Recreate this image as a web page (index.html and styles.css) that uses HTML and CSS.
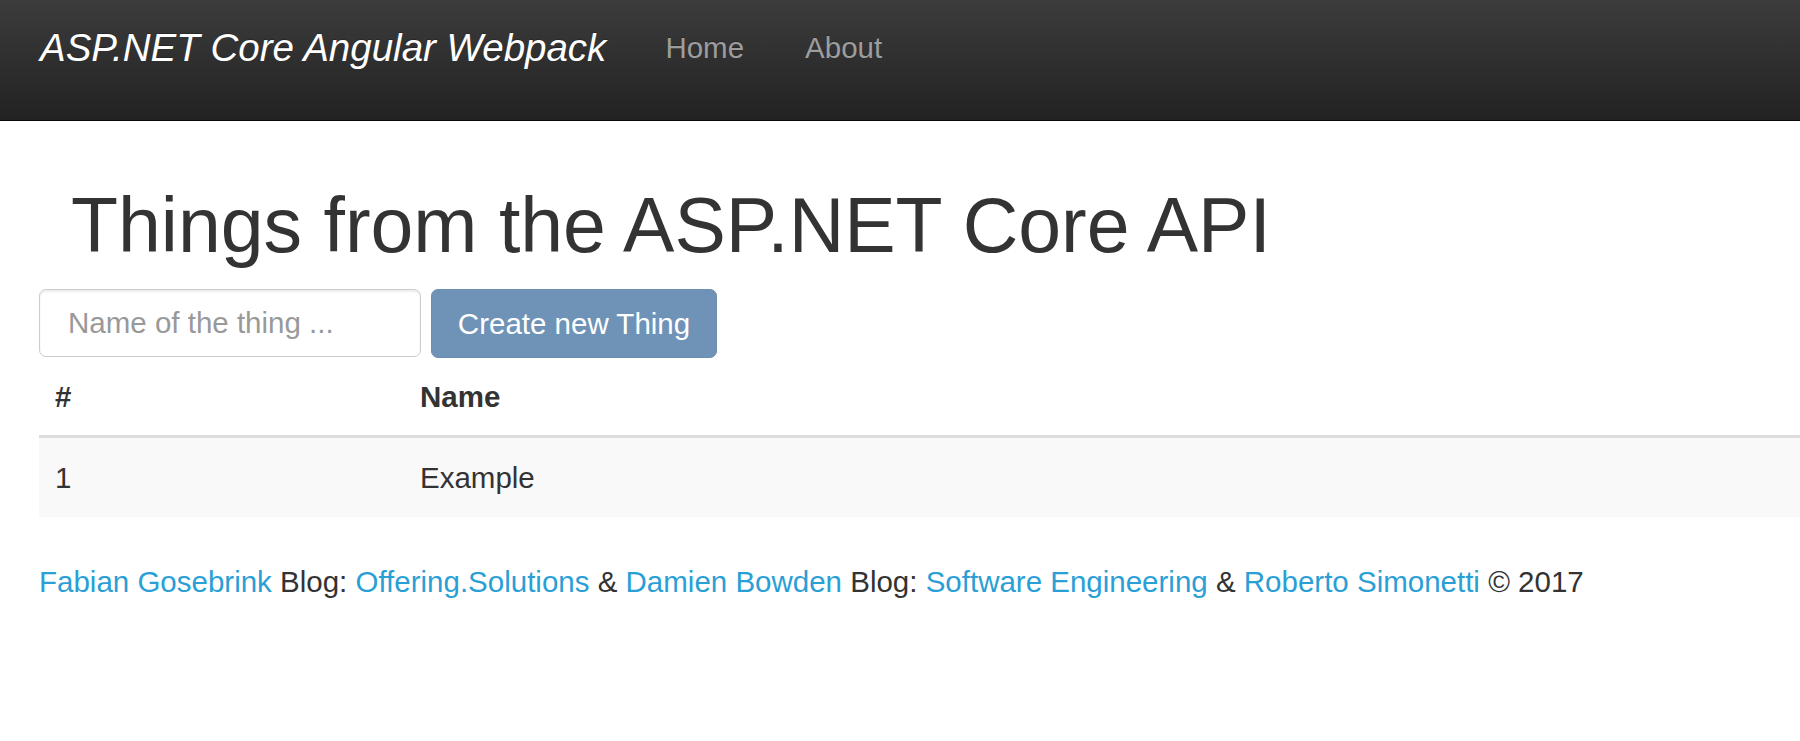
FILE: index.html
```html
<!DOCTYPE html>
<html lang="en">
<head>
<meta charset="utf-8">
<title>ASP.NET Core Angular Webpack</title>
<link rel="stylesheet" href="styles.css">
</head>
<body>
<nav class="navbar">
  <a class="brand" href="#">ASP.NET Core Angular Webpack</a>
  <ul class="nav">
    <li><a href="#">Home</a></li>
    <li><a href="#">About</a></li>
  </ul>
</nav>
<main class="container">
  <h1 class="title">Things from the ASP.NET Core API</h1>
  <form class="create-form">
    <input class="name-input" type="text" placeholder="Name of the thing ...">
    <button class="create-btn" type="button">Create new Thing</button>
  </form>
  <table class="things">
    <thead>
      <tr><th class="col-id">#</th><th>Name</th></tr>
    </thead>
    <tbody>
      <tr><td>1</td><td>Example</td></tr>
    </tbody>
  </table>
  <footer class="footer">
    <p><a href="#">Fabian Gosebrink</a> Blog: <a href="#">Offering.Solutions</a> &amp; <a href="#">Damien Bowden</a> Blog: <a href="#">Software Engineering</a> &amp; <a href="#">Roberto Simonetti</a> © 2017</p>
  </footer>
</main>
</body>
</html>
```
FILE: styles.css
```css
* { box-sizing: border-box; }
html, body { margin: 0; padding: 0; }
body {
  font-family: "Liberation Sans", Arial, sans-serif;
  font-size: 29.5px;
  line-height: 41px;
  color: #333;
  background: #fff;
}
a { text-decoration: none; }

.navbar {
  display: flex;
  align-items: flex-start;
  height: 121px;
  padding-left: 9px;
  background: linear-gradient(to bottom, #3c3c3c 0%, #222 100%);
  border-bottom: 1px solid #080808;
}
.brand {
  display: block;
  padding: 27px 31px;
  font-size: 38.5px;
  line-height: 42px;
  font-style: italic;
  color: #fff;
  text-shadow: 0 -1px 0 rgba(0,0,0,.25);
}
.nav {
  display: flex;
  list-style: none;
  margin: 0;
  padding: 0;
}
.nav a {
  display: block;
  padding: 27px 33px 27px 28px;
  font-size: 29.5px;
  line-height: 42px;
  color: #9d9d9d;
  text-shadow: 0 -1px 0 rgba(0,0,0,.25);
}

.container {
  padding-left: 39px;
}
.title {
  margin: 63px 0 0;
  padding-left: 32px;
  font-size: 77px;
  line-height: 83px;
  font-weight: 500;
  color: #333;
}

.create-form {
  display: flex;
  gap: 10px;
  margin-top: 22px;
}
.name-input {
  width: 382px;
  height: 68px;
  padding: 0 28px;
  border: 1px solid #ccc;
  border-radius: 7px;
  box-shadow: inset 0 2px 2px rgba(0,0,0,.075);
  font-family: inherit;
  font-size: 29.5px;
  color: #555;
}
.name-input::placeholder { color: #999; }
.create-btn {
  width: 286px;
  height: 69px;
  padding: 0;
  white-space: nowrap;
  text-align: center;
  border: 1px solid #6b8fb2;
  border-radius: 7px;
  background: #6f93b7;
  color: #fff;
  font-family: inherit;
  font-size: 29.5px;
}

.things {
  width: 100%;
  border-collapse: collapse;
  border-spacing: 0;
}
.things th {
  text-align: left;
  font-weight: bold;
  padding: 18px 16px;
  border-bottom: 3px solid #ddd;
}
.things th.col-id { width: 365px; }
.things td {
  padding: 19px 16px;
  background: #f9f9f9;
}

.footer { margin-top: 44px; }
.footer p { margin: 0; }
.footer a { color: #2a9fd6; }
```
